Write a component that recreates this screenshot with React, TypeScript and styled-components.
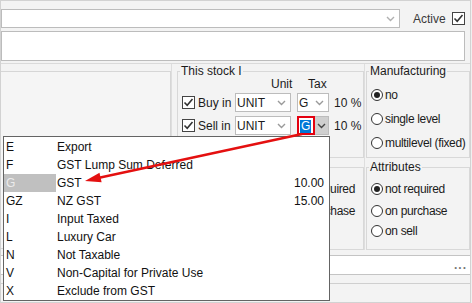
import React from 'react';
import styled, { createGlobalStyle } from 'styled-components';

// ─── Global ──────────────────────────────────────────────────────────────────

const GlobalStyle = createGlobalStyle`
  html, body { margin: 0; padding: 0; background: #f0f0f0; }
  body {
    font-family: "Liberation Sans", Arial, sans-serif;
    font-size: 12px;
    color: #1b1b1b;
  }
  * { box-sizing: border-box; }
`;

// ─── Styled Components ───────────────────────────────────────────────────────

const Frame = styled.div`
  position: relative;
  width: 471px;
  height: 303px;
  border: 1px solid #d2d2d2;
  background: #f3f3f3;
  display: flex;
  flex-direction: column;
  padding-top: 8px;
  overflow: hidden;
  white-space: nowrap;
`;

const TopRow = styled.div`
  display: flex;
  align-items: center;
  height: 19px;
`;

const Combo = styled.div<{ w: number }>`
  width: ${p => p.w}px;
  height: 19px;
  flex: none;
  background: #fff;
  border: 1px solid #bcbcbc;
  display: flex;
  align-items: center;
  justify-content: space-between;
  padding: 0 4px 0 2px;
  color: #1b1b1b;
`;

const Chevron = ({ color = '#9a9a9a' }: { color?: string }) => (
  <svg width="9" height="6" viewBox="0 0 9 6">
    <path d="M1 1 L4.5 4.5 L8 1" fill="none" stroke={color} strokeWidth="1.4" />
  </svg>
);

const ActiveLabel = styled.span`
  margin-left: 13px;
  color: #3a3a3a;
`;

const CheckBox = styled.span`
  display: inline-flex;
  align-items: center;
  justify-content: center;
  width: 13px;
  height: 13px;
  border: 1px solid #444;
  background: #fff;
  flex: none;
`;

const Tick = () => (
  <svg width="11" height="11" viewBox="0 0 11 11">
    <path d="M1.5 5.5 L4.2 8.2 L9.5 2" fill="none" stroke="#333" strokeWidth="1.6" />
  </svg>
);

const NameInput = styled.div`
  margin-top: 3px;
  width: 464px;
  height: 30px;
  background: #fff;
  border: 1px solid #bcbcbc;
`;

const Section = styled.div`
  margin-top: 2px;
  border-top: 1px solid #dadada;
  display: flex;
  align-items: flex-start;
  padding-bottom: 5px;
`;

const LeftPanel = styled.div`
  margin-top: 7px;
  width: 170px;
  flex: none;
  height: 178px;
  border: 1px solid #d6d6d6;
  border-left: none;
  background: #f5f5f5;
`;

const Column = styled.div<{ w?: number; pad: number }>`
  width: ${p => (p.w ? `${p.w}px` : 'auto')};
  flex: ${p => (p.w ? 'none' : '1')};
  min-width: 0;
  border-left: 1px solid #dedede;
  padding-left: ${p => p.pad}px;
  display: flex;
  flex-direction: column;
  gap: 2px;
`;

const Group = styled.fieldset<{ h: number }>`
  margin: 0;
  padding: 0 4px 0 4px;
  min-width: 0;
  height: ${p => p.h}px;
  border: 1px solid #d8d8d8;
  display: flex;
  flex-direction: column;
`;

const Legend = styled.legend`
  padding: 0 1px;
  margin-left: -2px;
  line-height: 14px;
  color: #1b1b1b;
`;

const HeaderRow = styled.div`
  display: flex;
  height: 14px;
  line-height: 14px;
  padding-left: 89px;
  margin-top: -1px;
`;

const HeaderCell = styled.span<{ w: number }>`
  width: ${p => p.w}px;
`;

const StockRow = styled.div`
  display: flex;
  align-items: center;
  height: 19px;
  margin-top: 2px;
  & + & { margin-top: 4px; }
`;

const RowLabel = styled.span`
  width: 37px;
  margin-left: 3px;
  flex: none;
`;

const SmallCombo = styled(Combo)`
  margin-right: 6px;
  padding: 0 4px 0 1px;
`;

const Percent = styled.span`
  flex: none;
`;

const TaxPicker = styled.div`
  display: flex;
  flex: none;
  width: 32px;
  height: 19px;
  margin-right: 5px;
`;

const TaxEdit = styled.div`
  width: 18px;
  height: 19px;
  border: 2px solid #e4000f;
  background: #fff;
  padding: 1px 0 0 1px;
`;

const Selected = styled.span`
  background: #0078d7;
  color: #fff;
  display: inline-block;
  line-height: 13px;
  padding: 0 1px;
`;

const TaxButton = styled.div`
  flex: 1;
  background: #cfcfcf;
  border: 1px solid #bcbcbc;
  border-left: none;
  display: flex;
  align-items: center;
  justify-content: center;
`;

const RadioList = styled.div<{ end?: boolean }>`
  display: flex;
  flex-direction: column;
  align-items: ${p => (p.end ? 'flex-end' : 'flex-start')};
  padding: ${p => (p.end ? '0 4px 0 0' : '0')};
`;

const RadioItem = styled.div<{ gap: number }>`
  display: flex;
  align-items: center;
  gap: 2px;
  height: 16px;
  letter-spacing: -0.35px;
  margin-top: ${p => p.gap}px;
`;

const RadioDot = styled.span<{ on?: boolean }>`
  width: 12px;
  height: 12px;
  flex: none;
  border-radius: 50%;
  border: 1px solid #333;
  background: #fff;
  display: inline-flex;
  align-items: center;
  justify-content: center;
  &::after {
    content: '';
    display: ${p => (p.on ? 'block' : 'none')};
    width: 6px;
    height: 6px;
    border-radius: 50%;
    background: #222;
  }
`;

const PathInput = styled.div`
  width: 469px;
  height: 20px;
  background: #fff;
  border-top: 1px solid #c4c4c4;
  border-bottom: 1px solid #c4c4c4;
  display: flex;
  align-items: center;
  justify-content: flex-end;
  padding-right: 3px;
  color: #777;
  letter-spacing: 1px;
  font-weight: bold;
`;

const Divider = styled.div`
  margin-top: 8px;
  border-top: 1px solid #cfcfcf;
`;

// dropdown popup lying over the form
const DropList = styled.div`
  position: absolute;
  left: 2px;
  top: 135px;
  width: 327px;
  height: 165px;
  background: #fff;
  border: 1px solid #646464;
  padding-top: 1px;
  z-index: 2;
`;

const DropRow = styled.div`
  display: flex;
  height: 18px;
  line-height: 18px;
  color: #111;
`;

const CodeCell = styled.span<{ active?: boolean }>`
  width: 52px;
  padding-left: 2px;
  background: ${p => (p.active ? '#c0c0c0' : 'transparent')};
  color: ${p => (p.active ? '#ececec' : '#111')};
`;

const DescCell = styled.span`
  flex: 1;
  padding-left: 1px;
`;

const RateCell = styled.span`
  padding-right: 5px;
`;

const ArrowLayer = styled.svg`
  position: absolute;
  left: -1px;
  top: -1px;
  z-index: 3;
  pointer-events: none;
`;

// ─── Data ────────────────────────────────────────────────────────────────────

const TAX_CODES = [
  { code: 'E', name: 'Export' },
  { code: 'F', name: 'GST Lump Sum Deferred' },
  { code: 'G', name: 'GST', rate: '10.00', active: true },
  { code: 'GZ', name: 'NZ GST', rate: '15.00' },
  { code: 'I', name: 'Input Taxed' },
  { code: 'L', name: 'Luxury Car' },
  { code: 'N', name: 'Not Taxable' },
  { code: 'V', name: 'Non-Capital for Private Use' },
  { code: 'X', name: 'Exclude from GST' },
];

// ─── Component ───────────────────────────────────────────────────────────────

const App: React.FC = () => (
  <>
    <GlobalStyle />
    <Frame>
      <TopRow>
        <Combo w={399}>
          <span />
          <Chevron color="#b0b0b0" />
        </Combo>
        <ActiveLabel>Active</ActiveLabel>
        <CheckBox style={{ marginLeft: 6 }}>
          <Tick />
        </CheckBox>
      </TopRow>

      <NameInput />

      <Section>
        <LeftPanel />

        <Column w={193} pad={5}>
          <Group h={94}>
            <Legend>This stock I</Legend>
            <HeaderRow>
              <HeaderCell w={37}>Unit</HeaderCell>
              <HeaderCell w={30}>Tax</HeaderCell>
            </HeaderRow>
            <StockRow>
              <CheckBox><Tick /></CheckBox>
              <RowLabel>Buy in</RowLabel>
              <SmallCombo w={56}>UNIT<Chevron /></SmallCombo>
              <SmallCombo w={32} style={{ marginRight: 5 }}>G<Chevron /></SmallCombo>
              <Percent>10 %</Percent>
            </StockRow>
            <StockRow>
              <CheckBox><Tick /></CheckBox>
              <RowLabel>Sell in</RowLabel>
              <SmallCombo w={56}>UNIT<Chevron /></SmallCombo>
              <TaxPicker>
                <TaxEdit><Selected>G</Selected></TaxEdit>
                <TaxButton><Chevron color="#444" /></TaxButton>
              </TaxPicker>
              <Percent>10 %</Percent>
            </StockRow>
          </Group>
          <Group h={90}>
            <Legend>Serial No.</Legend>
            <RadioList end>
              <RadioItem gap={7}><RadioDot on />not required</RadioItem>
              <RadioItem gap={6}><RadioDot />on purchase</RadioItem>
            </RadioList>
          </Group>
        </Column>

        <Column pad={1}>
          <Group h={94}>
            <Legend>Manufacturing</Legend>
            <RadioList>
              <RadioItem gap={9}><RadioDot on />no</RadioItem>
              <RadioItem gap={8}><RadioDot />single level</RadioItem>
              <RadioItem gap={8}><RadioDot />multilevel (fixed)</RadioItem>
            </RadioList>
          </Group>
          <Group h={90}>
            <Legend>Attributes</Legend>
            <RadioList>
              <RadioItem gap={7}><RadioDot on />not required</RadioItem>
              <RadioItem gap={6}><RadioDot />on purchase</RadioItem>
              <RadioItem gap={4}><RadioDot />on sell</RadioItem>
            </RadioList>
          </Group>
        </Column>
      </Section>

      <PathInput>...</PathInput>
      <Divider />

      <DropList>
        {TAX_CODES.map(t => (
          <DropRow key={t.code}>
            <CodeCell active={t.active}>{t.code}</CodeCell>
            <DescCell>{t.name}</DescCell>
            {t.rate && <RateCell>{t.rate}</RateCell>}
          </DropRow>
        ))}
      </DropList>

      <ArrowLayer width="472" height="303" viewBox="0 0 472 303">
        <line x1="302" y1="134" x2="98" y2="178" stroke="#e41010" strokeWidth="2.4" />
        <polygon points="85,181 99.5,172.8 101.6,182.3" fill="#e41010" />
      </ArrowLayer>
    </Frame>
  </>
);

export default App;
